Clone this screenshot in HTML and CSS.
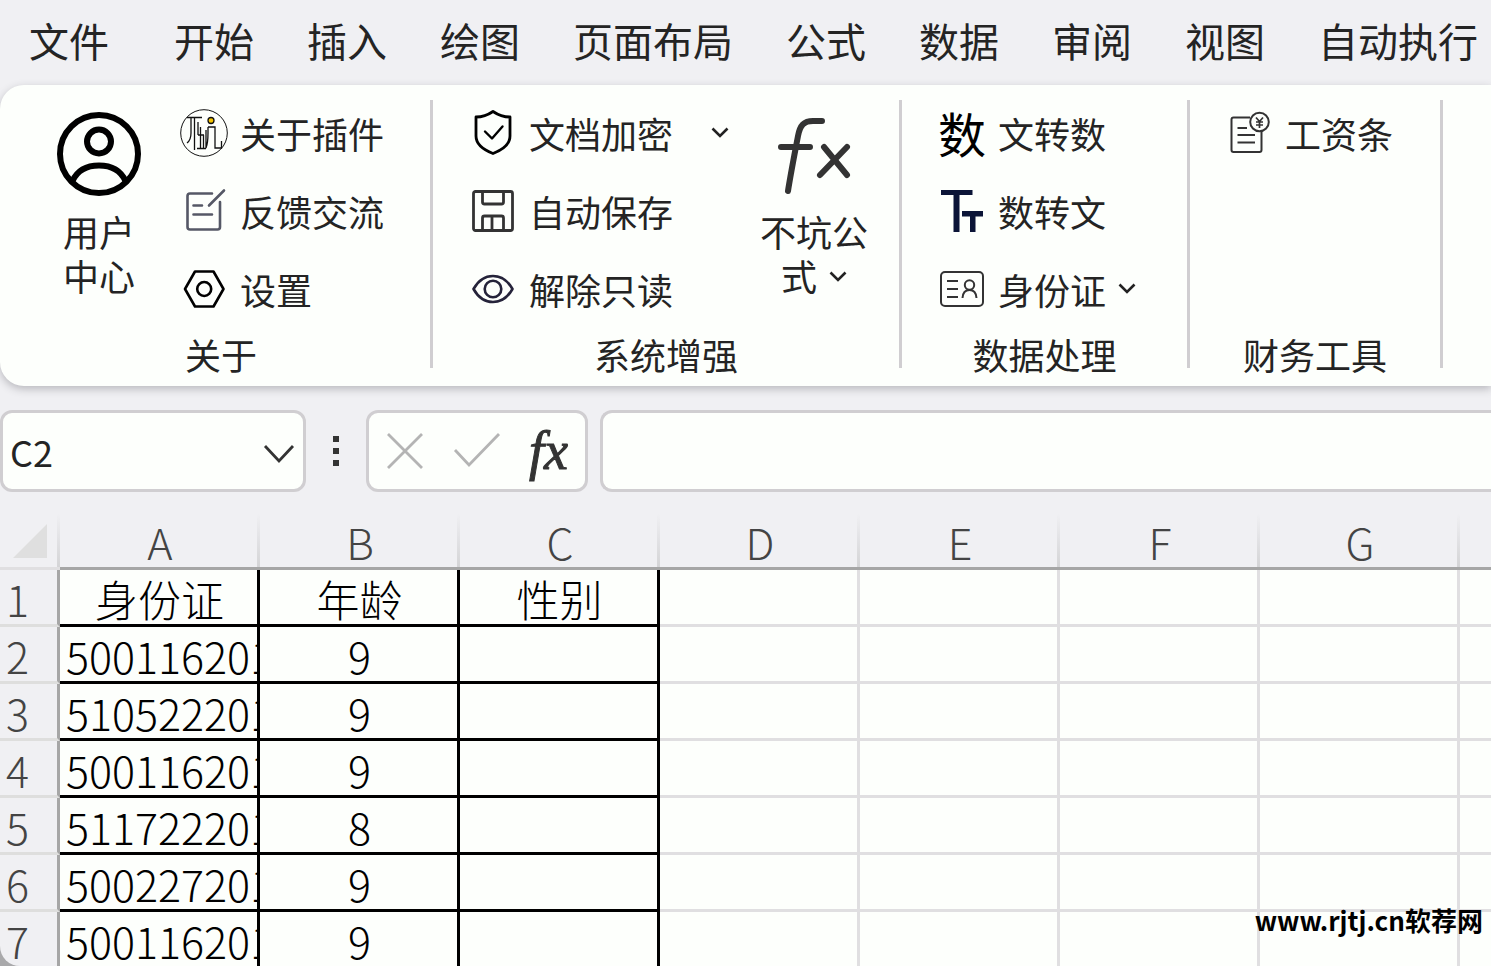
FILE: index.html
```html
<!DOCTYPE html>
<html lang="zh-CN">
<head>
<meta charset="utf-8">
<title>工作簿</title>
<link rel="stylesheet" href="styles.css">
</head>
<body>
<nav class="tabs">
  <button class="tab tab-file">文件</button>
  <button class="tab">开始</button>
  <button class="tab">插入</button>
  <button class="tab">绘图</button>
  <button class="tab">页面布局</button>
  <button class="tab">公式</button>
  <button class="tab">数据</button>
  <button class="tab">审阅</button>
  <button class="tab">视图</button>
  <button class="tab">自动执行</button>
</nav>

<section class="ribbon">
  <div class="group group-about">
    <div class="tools">
      <button class="big big-user">
        <svg class="icon-user" viewBox="0 0 84 84" fill="none" stroke="#000" stroke-width="6"><circle cx="42" cy="42" r="39"/><circle cx="42" cy="29.500" r="12"/><path d="M15.500 69C21 57 31 53.500 42 53.500S63 57 68.500 69"/></svg>
        <span>用户<br>中心</span>
      </button>
      <div class="list">
        <button class="tool">
          <svg class="icon" viewBox="0 0 48 48" fill="none" stroke="#111" stroke-width="1.300"><circle cx="24" cy="24" r="23.300" stroke-width="1"/><path d="M7 8.500H22M11 9V24Q11 31 7 34M14.500 9V41M18 13V26M18 26H24M20.500 18V39M23.500 26V39M17 39.500H26M26 39V21M28 18H35V39H41.500V32M28 18V24Q28 34 26 39"/><circle cx="31" cy="11.500" r="3" fill="#f5c400"/></svg>
          <span>关于插件</span>
        </button>
        <button class="tool">
          <svg class="icon" viewBox="0 0 48 48" fill="none" stroke="#555866" stroke-width="2.600" stroke-linecap="round" stroke-linejoin="round"><path d="M32 6.500H10Q7.500 6.500 7.500 9V40Q7.500 42.500 10 42.500H37.500Q40 42.500 40 40V15M13.500 18.500H22M13.500 27.500H32M29 18.500L44 3.500"/></svg>
          <span>反馈交流</span>
        </button>
        <button class="tool">
          <svg class="icon" viewBox="0 0 48 48" fill="none" stroke="#000" stroke-width="2.600" stroke-linejoin="round"><path d="M15 6.500H33.500L43.500 24L33.500 41.500H15L5 24Z"/><circle cx="24.200" cy="24" r="7"/></svg>
          <span>设置</span>
        </button>
      </div>
    </div>
    <div class="caption">关于</div>
  </div>

  <div class="group">
    <div class="tools tools-system">
      <div class="list">
        <button class="tool tool-wide">
          <svg class="icon" viewBox="0 0 48 48" fill="none" stroke="#000" stroke-width="2.800" stroke-linejoin="round" stroke-linecap="round"><path d="M24 2.500Q32 8 41 8V27C41 36 33 41 24 44.500C15 41 7 36 7 27V8Q16 8 24 2.500Z"/><path d="M16 22.500L23 29.500L33.500 17.500" stroke-width="2.400"/></svg>
          <span>文档加密</span>
          <svg class="chevron" viewBox="0 0 18 12" fill="none" stroke="#222" stroke-width="2.600"><path d="M1.500 1.500L9 9L16.500 1.500"/></svg>
        </button>
        <button class="tool">
          <svg class="icon" viewBox="0 0 48 48" fill="none" stroke="#333" stroke-width="2.800" stroke-linejoin="round"><rect x="4.500" y="4.500" width="39" height="39" rx="2"/><path d="M13.500 5V15Q13.500 17 15.500 17H32.500Q34.500 17 34.500 15V5M13.500 43V31Q13.500 29 15.500 29H32.500Q34.500 29 34.500 31V43M23 29V43"/></svg>
          <span>自动保存</span>
        </button>
        <button class="tool">
          <svg class="icon" viewBox="0 0 48 48" fill="none" stroke="#25233a" stroke-width="2.600" stroke-linejoin="round"><path d="M4.500 24C9 16 15.500 11 24 11S39 16 43.500 24C39 32 32.500 37 24 37S9 32 4.500 24Z"/><circle cx="24" cy="24" r="8.300"/></svg>
          <span>解除只读</span>
        </button>
      </div>
      <button class="big big-formula">
        <svg class="icon-fx" viewBox="0 0 84 84" fill="none" stroke="#333" stroke-width="6" stroke-linecap="round" stroke-linejoin="round"><path d="M16 79C19 60 23 40 26 24C28 13 32 9 41 9H50M9 35H38M52 35L75 63M75 35L48 63"/></svg>
        <span>不坑公<br>式<svg class="chevron chevron-inline" viewBox="0 0 18 12" fill="none" stroke="#222" stroke-width="2.600"><path d="M1.500 1.500L9 9L16.500 1.500"/></svg></span>
      </button>
    </div>
    <div class="caption">系统增强</div>
  </div>

  <div class="group">
    <div class="tools tools-data">
      <div class="list">
        <button class="tool">
          <span class="icon icon-char">数</span>
          <span>文转数</span>
        </button>
        <button class="tool">
          <svg class="icon" viewBox="0 0 48 48" fill="#0b1437"><path d="M3 3H34.500V8H21.500V45H15.500V8H3ZM24 24H45V29.500H37.500V45H32V29.500H24Z"/></svg>
          <span>数转文</span>
        </button>
        <button class="tool">
          <svg class="icon" viewBox="0 0 48 48" fill="none" stroke="#333" stroke-width="2"><rect x="3" y="7" width="42" height="34" rx="4"/><path d="M9 16H20M9 24H20M9 32H20"/><circle cx="31.500" cy="20" r="4.700"/><path d="M24.500 33Q25 25 31.500 25T38.500 33"/></svg>
          <span>身份证</span>
          <svg class="chevron" viewBox="0 0 18 12" fill="none" stroke="#222" stroke-width="2.600"><path d="M1.500 1.500L9 9L16.500 1.500"/></svg>
        </button>
      </div>
    </div>
    <div class="caption">数据处理</div>
  </div>

  <div class="group">
    <div class="tools tools-finance">
      <div class="list">
        <button class="tool">
          <svg class="icon" viewBox="0 0 48 48" fill="none" stroke="#333" stroke-width="2"><path d="M25 8.500H8.500Q6.500 8.500 6.500 10.500V41Q6.500 43 8.500 43H34.500Q36.500 43 36.500 41V23M12.500 19H22M12.500 26H30M12.500 33.500H30"/><circle cx="34.500" cy="13" r="9.300"/><path d="M31 8.500L34.500 12.500L38 8.500M34.500 12.500V19M31 13H38M31 16H38" stroke-width="1.700"/></svg>
          <span>工资条</span>
        </button>
      </div>
    </div>
    <div class="caption">财务工具</div>
  </div>
</section>

<section class="formula-row">
  <div class="field name-box">
    <input class="name-input" aria-label="名称框" value="C2">
    <button class="plain" aria-label="展开名称列表"><svg class="name-arrow" viewBox="0 0 32 20" fill="none" stroke="#333" stroke-width="2.800"><path d="M2 2L16 17L30 2"/></svg></button>
  </div>
  <svg class="dots" viewBox="0 0 6 30" fill="#333"><path d="M0 0H6V6H0ZM0 12H6V18H0ZM0 24H6V30H0Z"/></svg>
  <div class="field actions">
    <button class="plain" aria-label="取消"><svg class="act" viewBox="0 0 48 40" fill="none" stroke="#b4b4b4" stroke-width="2.800"><path d="M7 3L41 37M41 3L7 37"/></svg></button>
    <button class="plain" aria-label="输入"><svg class="act" viewBox="0 0 48 40" fill="none" stroke="#b4b4b4" stroke-width="2.800"><path d="M2 19L16 34L46 3"/></svg></button>
    <button class="plain insert-fn" aria-label="插入函数">fx</button>
  </div>
  <input class="field formula-input" aria-label="编辑栏">
</section>

<main class="sheet">
  <table class="grid">
    <colgroup><col class="col-head"><col><col><col><col><col><col><col><col></colgroup>
    <thead>
      <tr><td class="corner"><svg class="select-all" viewBox="0 0 34 34" fill="#dfdfdf"><path d="M34 0V34H0Z"/></svg></td><th>A</th><th>B</th><th>C</th><th>D</th><th>E</th><th>F</th><th>G</th><th></th></tr>
    </thead>
    <tbody>
      <tr><th>1</th><td class="data mid">身份证</td><td class="data mid">年龄</td><td class="data mid">性别</td><td></td><td></td><td></td><td></td><td></td></tr>
      <tr><th>2</th><td class="data">500116201</td><td class="data mid">9</td><td class="data"></td><td></td><td></td><td></td><td></td><td></td></tr>
      <tr><th>3</th><td class="data">510522201</td><td class="data mid">9</td><td class="data"></td><td></td><td></td><td></td><td></td><td></td></tr>
      <tr><th>4</th><td class="data">500116201</td><td class="data mid">9</td><td class="data"></td><td></td><td></td><td></td><td></td><td></td></tr>
      <tr><th>5</th><td class="data">511722201</td><td class="data mid">8</td><td class="data"></td><td></td><td></td><td></td><td></td><td></td></tr>
      <tr><th>6</th><td class="data">500227201</td><td class="data mid">9</td><td class="data"></td><td></td><td></td><td></td><td></td><td></td></tr>
      <tr><th>7</th><td class="data">500116201</td><td class="data mid">9</td><td class="data"></td><td></td><td></td><td></td><td></td><td></td></tr>
    </tbody>
  </table>
</main>
<div class="watermark">www.rjtj.cn软荐网</div>
</body>
</html>
```
FILE: styles.css
```css
* { box-sizing: border-box; }
html { background: #a9a9ab; }
body {
  position: relative;
  display: flex;
  flex-direction: column;
  height: 100vh;
  margin: 0;
  overflow: hidden;
  border-bottom-left-radius: 20px;
  background: #f0f0f3;
  color: #242424;
  font-family: "Noto Sans CJK SC", sans-serif;
  font-size: 36px;
  line-height: 44px;
}
button, input {
  margin: 0;
  padding: 0;
  border: 0;
  background: none;
  color: inherit;
  font: inherit;
}
svg { display: block; flex: none; }

.tabs {
  display: flex;
  flex: none;
  gap: 53px;
  height: 85px;
  padding: 0 0 5px 29px;
  white-space: nowrap;
}
.tab { flex: none; font-size: 40px; font-weight: 400; }
.tab-file { margin-right: 12px; }

.ribbon {
  display: flex;
  flex: none;
  padding: 15px 0 9px;
  border-radius: 24px 0 0 24px;
  background: #fdfffc;
  box-shadow: 0 3px 8px #b8b8bd;
  font-weight: 400;
  white-space: nowrap;
}
.group {
  flex: none;
  margin-bottom: 9px;
  border-right: 3px solid #d0ced1;
}
.group-about { padding-left: 12px; }
.tools { display: flex; height: 234px; padding: 0 46px 0 42px; }
.tools-system { padding: 0 31px 0 36px; }
.tools-data { padding: 0 51px 0 36px; }
.tools-finance { padding: 0 47px 0 35px; }
.caption { height: 34px; line-height: 40px; text-align: center; }
.list { display: flex; flex-direction: column; }
.tool { display: flex; align-items: center; gap: 12px; height: 78px; padding-bottom: 12px; }
.tool-wide .chevron { margin-left: 26px; }
.icon { width: 48px; height: 48px; }
.icon-char { color: #000; font-size: 48px; line-height: 46px; }
.chevron { width: 18px; height: 12px; }
.big { display: flex; flex-direction: column; align-items: center; gap: 13px; padding-top: 12px; }
.big-user { width: 90px; margin-right: 36px; }
.big-formula { width: 108px; margin-left: 31px; }
.icon-user, .icon-fx { width: 84px; height: 84px; }
.chevron-inline { display: inline-block; margin-left: 12px; vertical-align: 8px; }

.formula-row { display: flex; flex: none; align-items: center; margin: 24px 0 21px; }
.field { height: 82px; border: 3px solid #d0ced1; border-radius: 12px; background: #fdfffc; }
.name-box { display: flex; align-items: center; justify-content: space-between; width: 306px; padding: 0 8px 0 7px; }
.name-input { width: 200px; height: 60px; }
.name-arrow { width: 32px; height: 20px; margin-top: 6px; }
.dots { width: 6px; height: 30px; margin: 0 27px; }
.actions { display: flex; align-items: center; gap: 24px; width: 222px; padding: 0 12px; }
.act { width: 48px; height: 40px; }
.insert-fn {
  padding-left: 4px;
  color: #333;
  font-family: "Liberation Serif", serif;
  font-size: 54px;
  font-style: italic;
  font-weight: 400;
  -webkit-text-stroke: 1px #333;
}
.formula-input { flex: 1; margin-left: 12px; border-right: 0; border-radius: 12px 0 0 12px; }

.sheet { flex: 1; min-height: 0; overflow: hidden; }
.grid {
  width: 1660px;
  table-layout: fixed;
  border-collapse: separate;
  border-spacing: 0;
  font-size: 43px;
  font-weight: 300;
  line-height: 50px;
}
.col-head { width: 60px; }
.grid th, .grid td { height: 57px; padding: 2px 0 0; border: 0 solid #e0dfe1; border-width: 0 3px 3px 0; font-weight: 300; white-space: nowrap; }
.grid tbody td { overflow: hidden; background: #fdfffc; }
.grid thead th, .grid .corner { border-right-width: 0; background: linear-gradient(#f0f0f3, #d4d4d6) right / 3px 100% no-repeat; }
.grid thead th { border-bottom-color: #a6a6a6; color: #444; }
.grid tbody th { padding-left: 6px; border-right-color: #a6a6a6; border-bottom-color: #dededd; color: #444; text-align: left; }
.grid .data { padding-left: 6px; border-color: #000; color: #000; }
.grid .mid { padding-left: 2px; text-align: center; }
.select-all { width: 34px; height: 34px; margin-left: 13px; }

.watermark {
  position: absolute;
  right: 8px;
  bottom: 28px;
  color: #000;
  font-size: 26px;
  font-weight: 700;
  line-height: 36px;
}
```
